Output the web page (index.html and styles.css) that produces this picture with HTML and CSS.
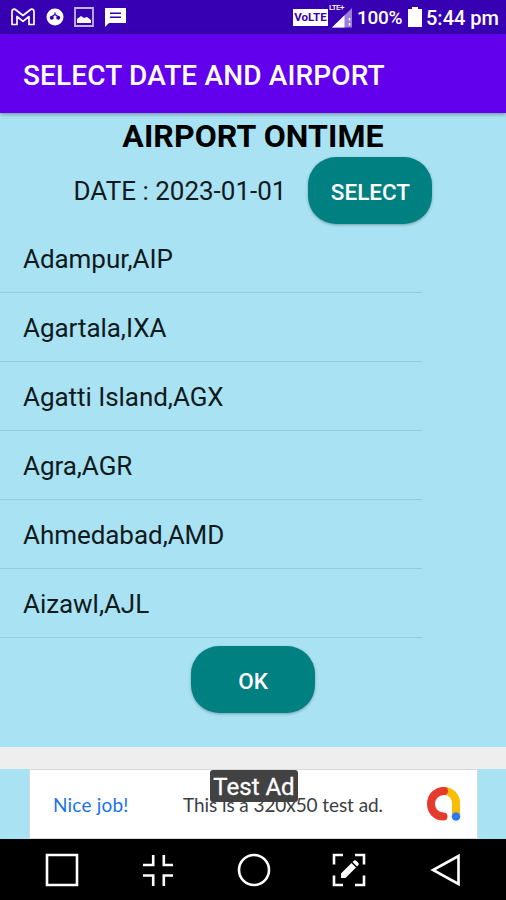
FILE: index.html
```
<!DOCTYPE html>
<html lang="en">
<head>
  <meta charset="UTF-8">
  <title>Airport Ontime</title>
  <link rel="stylesheet" href="styles.css">
</head>
<body>
  <div class="status-bar">
    <div class="notifications">
      <svg width="24" height="18" viewBox="0 0 24 18" fill="none" stroke="#fff" stroke-width="1.7" stroke-linejoin="round">
        <path d="M1 16.500V3.500C1 1.200 3.300.5 5 2l7 5.500L19 2c1.700-1.500 4-.8 4 1.500v13h-5V8.500l-6 4.800-6-4.800v8z"/>
      </svg>
      <svg width="18" height="18" viewBox="0 0 18 18">
        <circle cx="9" cy="9" r="8.500" fill="#fff"/>
        <path d="M9 4.500v3M6 8.500l3-2 3 2" stroke="#3700b3" stroke-width="1.300" fill="none"/>
        <circle cx="5.800" cy="9.800" r="2" fill="#3700b3"/>
        <circle cx="12.200" cy="9.800" r="2" fill="#3700b3"/>
      </svg>
      <svg width="20" height="20" viewBox="0 0 20 20">
        <path d="M1 1h18v18H1z" fill="none" stroke="#c5b5ee" stroke-width="1.800"/>
        <path d="M3 16v-4l4-3 3 2 3-1 4 3v3z" fill="#fff"/>
      </svg>
      <svg width="21" height="19" viewBox="0 0 21 19">
        <path d="M0 0h21v15H4l-4 4z" fill="#fff"/>
        <path d="M5 5.200h11M5 9.300h11" stroke="#3700b3" stroke-width="1.500"/>
      </svg>
    </div>
    <div class="system">
      <span class="volte">VoLTE</span>
      <div class="signal">
        <span class="lte">LTE+</span>
        <svg width="22" height="21" viewBox="0 0 22 21">
          <path d="M1 20.500L21 1v19.500z" fill="#9b7fda"/>
          <path d="M1 20.500L13.500 8.300v12.200z" fill="#fff"/>
          <path d="M18.500 11v2.500M18.500 16v2.500" stroke="#fff" stroke-width="1.500"/>
        </svg>
      </div>
      <span class="percent">100%</span>
      <svg class="battery" width="14" height="20" viewBox="0 0 14 20">
        <path d="M4 0h6v2h4v18H0V2h4z" fill="#fff"/>
      </svg>
      <span class="clock">5:44 pm</span>
    </div>
  </div>

  <div class="app-bar">SELECT DATE AND AIRPORT</div>

  <div class="content">
    <h1 class="heading">AIRPORT ONTIME</h1>
    <div class="date-row">
      <span class="date">DATE : 2023-01-01</span>
      <button class="btn">SELECT</button>
    </div>
    <ul class="airports">
      <li>Adampur,AIP</li>
      <li>Agartala,IXA</li>
      <li>Agatti Island,AGX</li>
      <li>Agra,AGR</li>
      <li>Ahmedabad,AMD</li>
      <li>Aizawl,AJL</li>
    </ul>
    <button class="btn btn-ok">OK</button>
  </div>

  <div class="gap"></div>

  <div class="ad-area">
    <div class="ad">
      <span class="ad-title">Nice job!</span>
      <span class="ad-text">This is a 320x50 test ad.</span>
      <svg class="ad-logo" width="36" height="36" viewBox="0 0 36 36" fill="none" stroke-linecap="round">
        <path d="M18 5C25 5 30 10.500 30 17v12" stroke="#fbbc04" stroke-width="8"/>
        <path d="M18 5C10 5 5 11 5 18S10 30.500 17.500 30.500" stroke="#e53b2e" stroke-width="8"/>
        <circle cx="30" cy="30.500" r="4.300" fill="#3079ed"/>
      </svg>
      <span class="ad-label">Test Ad</span>
    </div>
  </div>

  <div class="nav-bar">
    <svg width="34" height="34" viewBox="0 0 34 34"><path d="M2 2h30v30H2z"/></svg>
    <svg width="34" height="34" viewBox="0 0 34 34"><path d="M12.200 2v10H2M22.800 2v10H32M12.200 33V22.500H2M22.800 33V22.500H32"/></svg>
    <svg width="34" height="34" viewBox="0 0 34 34"><circle cx="17" cy="17" r="15"/></svg>
    <svg width="34" height="34" viewBox="0 0 34 34">
      <path d="M2 11.500V2h9M23 2h9v9.500M2 22.500V32h9M23 32h9v-9.500"/>
      <path class="solid" d="M9 25v-4.500L19.500 10l4.500 4.500L13.500 25zM20.500 9l1.500-1.500q1-.7 2 0L26.500 10q.7 1 0 2L25 13.500z"/>
    </svg>
    <svg width="34" height="34" viewBox="0 0 34 34"><path d="M30.500 3v28L5 17z"/></svg>
  </div>
</body>
</html>
```
FILE: styles.css
```
* {
  box-sizing: border-box;
}
body {
  margin: 0;
  height: 900px;
  display: flex;
  flex-direction: column;
  overflow: hidden;
  background: #a9e2f3;
  font-family: Roboto, "Liberation Sans", sans-serif;
  color: #101a1d;
}
svg {
  display: block;
  flex-shrink: 0;
}
.status-bar {
  display: flex;
  justify-content: space-between;
  height: 34px;
  padding: 0 8px 0 11px;
  background: #3700b3;
  color: #fff;
}
.notifications,
.system {
  display: flex;
  align-items: center;
}
.notifications {
  gap: 10.5px;
}
.volte {
  width: 35px;
  height: 17px;
  background: #fff;
  color: #3700b3;
  font-size: 11.5px;
  font-weight: 700;
  line-height: 17px;
  text-align: center;
}
.signal {
  position: relative;
  margin: 0 4px 0 3px;
}
.lte {
  position: absolute;
  top: -4px;
  left: -2px;
  font-size: 8px;
  line-height: 10px;
  font-weight: 500;
  letter-spacing: -0.6px;
}
.percent {
  width: 46px;
  padding-top: 1px;
  font-size: 19px;
  font-weight: 500;
  letter-spacing: -0.3px;
  white-space: nowrap;
}
.battery {
  margin: 0 4px 0 5px;
}
.clock {
  width: 72px;
  padding-top: 2px;
  font-size: 20px;
  font-weight: 500;
  white-space: nowrap;
}
.app-bar {
  position: relative;
  height: 79px;
  padding: 2px 23px 0;
  background: #6200ee;
  box-shadow: 0 1px 4px rgba(0, 0, 0, 0.4);
  color: #fff;
  font-size: 28px;
  font-weight: 500;
  letter-spacing: 0.15px;
  line-height: 79px;
}
.content {
  height: 634px;
  display: flex;
  flex-direction: column;
}
.heading {
  margin: 3px 0 0;
  height: 41px;
  font-size: 32px;
  line-height: 41px;
  letter-spacing: 0.1px;
  font-weight: 700;
  text-align: center;
  color: #000;
}
.date-row {
  display: flex;
  align-items: center;
  justify-content: center;
  gap: 22px;
}
.date {
  padding-top: 1px;
  font-size: 26px;
}
.btn {
  width: 124px;
  height: 67px;
  padding: 2px 0 0;
  border: none;
  border-radius: 28px;
  background: #008080;
  box-shadow: 0 1px 3px rgba(0, 0, 0, 0.3);
  color: #fff;
  font-family: inherit;
  font-size: 22.5px;
  font-weight: 500;
}
.airports {
  width: 422px;
  margin: 0 0 8px;
  padding: 0;
  list-style: none;
  font-size: 26px;
  letter-spacing: -0.05px;
}
.airports li {
  height: 69px;
  padding-left: 23px;
  border-bottom: 1.5px solid #96cbdc;
  line-height: 70px;
}
.btn-ok {
  align-self: center;
}
.gap {
  height: 22px;
  background: #eee;
}
.ad-area {
  height: 70px;
  padding: 0 28px 0 29px;
}
.ad {
  position: relative;
  display: flex;
  align-items: center;
  height: 70px;
  padding: 0 15px 0 23px;
  border: 1px solid #d5dbdd;
  background: #fff;
}
.ad-title,
.ad-text {
  font-family: Lato, sans-serif;
  font-size: 19px;
  white-space: nowrap;
}
.ad-title {
  width: 130px;
  letter-spacing: 0.2px;
  color: #1a73e8;
}
.ad-text {
  letter-spacing: -0.08px;
  color: #3c4043;
}
.ad-logo {
  margin-left: auto;
}
.ad-label {
  position: absolute;
  top: 0;
  left: 180px;
  width: 88px;
  height: 32px;
  border-radius: 3px;
  background: #424242;
  color: #fff;
  font-size: 24px;
  line-height: 34px;
  -webkit-text-stroke: 0.3px #fff;
  text-align: center;
  white-space: nowrap;
}
.nav-bar {
  display: flex;
  justify-content: space-between;
  align-items: center;
  height: 61px;
  padding: 0 44px 0 45px;
  background: #000;
}
.nav-bar svg {
  fill: none;
  stroke: #fff;
  stroke-width: 2.6;
}
.nav-bar .solid {
  fill: #fff;
  stroke: none;
}
```
